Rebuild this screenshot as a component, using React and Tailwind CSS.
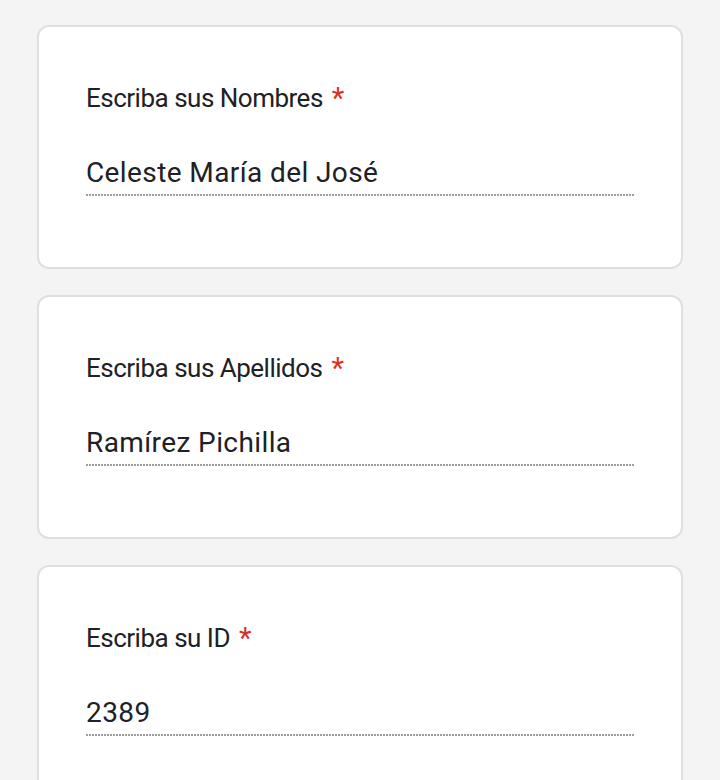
import React from "react";

const fields = [
  { label: "Escriba sus Nombres", value: "Celeste María del José" },
  { label: "Escriba sus Apellidos", value: "Ramírez Pichilla" },
  { label: "Escriba su ID", value: "2389" },
];

function Question({ label, value }) {
  return (
    <div className="bg-white border-2 border-[#dfdfe1] rounded-[12px] px-[47px] pt-[51px] h-[244px]">
      <div className="flex items-start text-[#202124] text-[26px] leading-[40px] font-['Roboto',sans-serif] tracking-[-0.5px]">
        <span>{label}</span>
        <span className="text-[#d93025] ml-[9px] text-[29px]">*</span>
      </div>
      <div className="mt-[36px] text-[#202124] text-[28px] leading-[38px] tracking-[0.4px] font-['Roboto',sans-serif]">
        {value}
      </div>
      <div className="h-[2px] mt-[2px] bg-[repeating-linear-gradient(to_right,#9e9e9e_0_2px,transparent_2px_3px)]"></div>
    </div>
  );
}

export default function App() {
  return (
    <div className="min-h-screen bg-[#f4f4f4] px-[37px] pt-[25px] pb-8 flex flex-col gap-[26px]">
      {fields.map((f) => (
        <Question key={f.label} label={f.label} value={f.value} />
      ))}
    </div>
  );
}
